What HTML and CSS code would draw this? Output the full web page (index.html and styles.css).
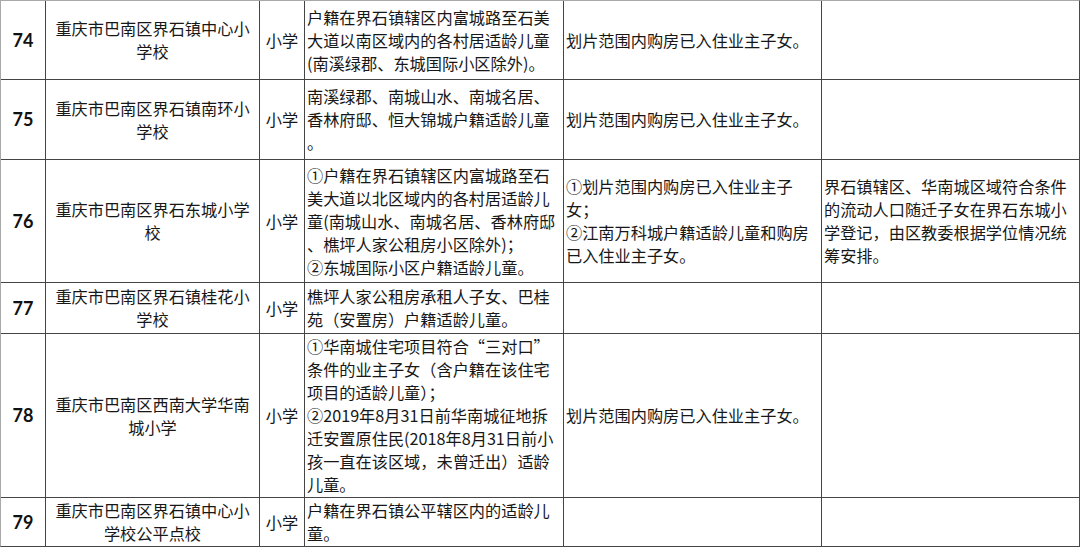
FILE: index.html
```html
<!DOCTYPE html>
<html lang="zh-CN">
<head>
<meta charset="utf-8">
<title>学区划分表</title>
<link rel="stylesheet" href="styles.css">
</head>
<body>
<div class="sheet">
  <div class="c num">74</div>
  <div class="c name">重庆市巴南区界石镇中心小<br>学校</div>
  <div class="c type">小学</div>
  <div class="c txt">户籍在界石镇辖区内富城路至石美<br>大道以南区域内的各村居适龄儿童<br>(南溪绿郡、东城国际小区除外)。</div>
  <div class="c txt">划片范围内购房已入住业主子女。</div>
  <div class="c txt"></div>

  <div class="c num">75</div>
  <div class="c name">重庆市巴南区界石镇南环小<br>学校</div>
  <div class="c type">小学</div>
  <div class="c txt">南溪绿郡、南城山水、南城名居、<br>香林府邸、恒大锦城户籍适龄儿童<br>。</div>
  <div class="c txt">划片范围内购房已入住业主子女。</div>
  <div class="c txt"></div>

  <div class="c num">76</div>
  <div class="c name">重庆市巴南区界石东城小学<br>校</div>
  <div class="c type">小学</div>
  <div class="c txt">①户籍在界石镇辖区内富城路至石<br>美大道以北区域内的各村居适龄儿<br>童(南城山水、南城名居、香林府邸<br>、樵坪人家公租房小区除外)；<br>②东城国际小区户籍适龄儿童。</div>
  <div class="c txt">①划片范围内购房已入住业主子<br>女；<br>②江南万科城户籍适龄儿童和购房<br>已入住业主子女。</div>
  <div class="c txt">界石镇辖区、华南城区域符合条件<br>的流动人口随迁子女在界石东城小<br>学登记，由区教委根据学位情况统<br>筹安排。</div>

  <div class="c num">77</div>
  <div class="c name">重庆市巴南区界石镇桂花小<br>学校</div>
  <div class="c type">小学</div>
  <div class="c txt">樵坪人家公租房承租人子女、巴桂<br>苑（安置房）户籍适龄儿童。</div>
  <div class="c txt"></div>
  <div class="c txt"></div>

  <div class="c num">78</div>
  <div class="c name">重庆市巴南区西南大学华南<br>城小学</div>
  <div class="c type">小学</div>
  <div class="c txt">①华南城住宅项目符合“三对口”<br>条件的业主子女（含户籍在该住宅<br>项目的适龄儿童）；<br>②2019年8月31日前华南城征地拆<br>迁安置原住民(2018年8月31日前小<br>孩一直在该区域，未曾迁出）适龄<br>儿童。</div>
  <div class="c txt">划片范围内购房已入住业主子女。</div>
  <div class="c txt"></div>

  <div class="c num">79</div>
  <div class="c name">重庆市巴南区界石镇中心小<br>学校公平点校</div>
  <div class="c type">小学</div>
  <div class="c txt">户籍在界石镇公平辖区内的适龄儿<br>童。</div>
  <div class="c txt"></div>
  <div class="c txt"></div>
</div>
</body>
</html>
```

FILE: styles.css
```css
html, body {
  margin: 0;
  padding: 0;
  background: #ffffff;
}

.sheet {
  display: grid;
  grid-template-columns: 44px 213px 44px 258px 257px 257px;
  grid-template-rows: 78px 79px 122px 50px 163px 48px;
  gap: 1px;
  width: 1080px;
  height: 547px;
  box-sizing: border-box;
  background: #454545;
  border-left: 1px solid #a8a8a8;
  border-top: 1px solid #a8a8a8;
  border-right: 1px solid #4a4a4a;
  border-bottom: 1px solid #454545;
  font-family: "Noto Sans CJK SC", "Noto Sans", sans-serif;
  font-size: 16.2px;
  line-height: 23px;
  color: #171717;
}

.c {
  background: #ffffff;
  display: flex;
  align-items: center;
  white-space: nowrap;
  overflow: hidden;
}

.num {
  justify-content: center;
  font-family: "Lato", "Noto Sans", sans-serif;
  font-weight: 700;
  font-size: 18px;
  color: #111111;
}

.name {
  justify-content: center;
  text-align: center;
}

.type {
  justify-content: center;
}

.txt {
  justify-content: flex-start;
  text-align: left;
  padding-left: 2px;
}
```
